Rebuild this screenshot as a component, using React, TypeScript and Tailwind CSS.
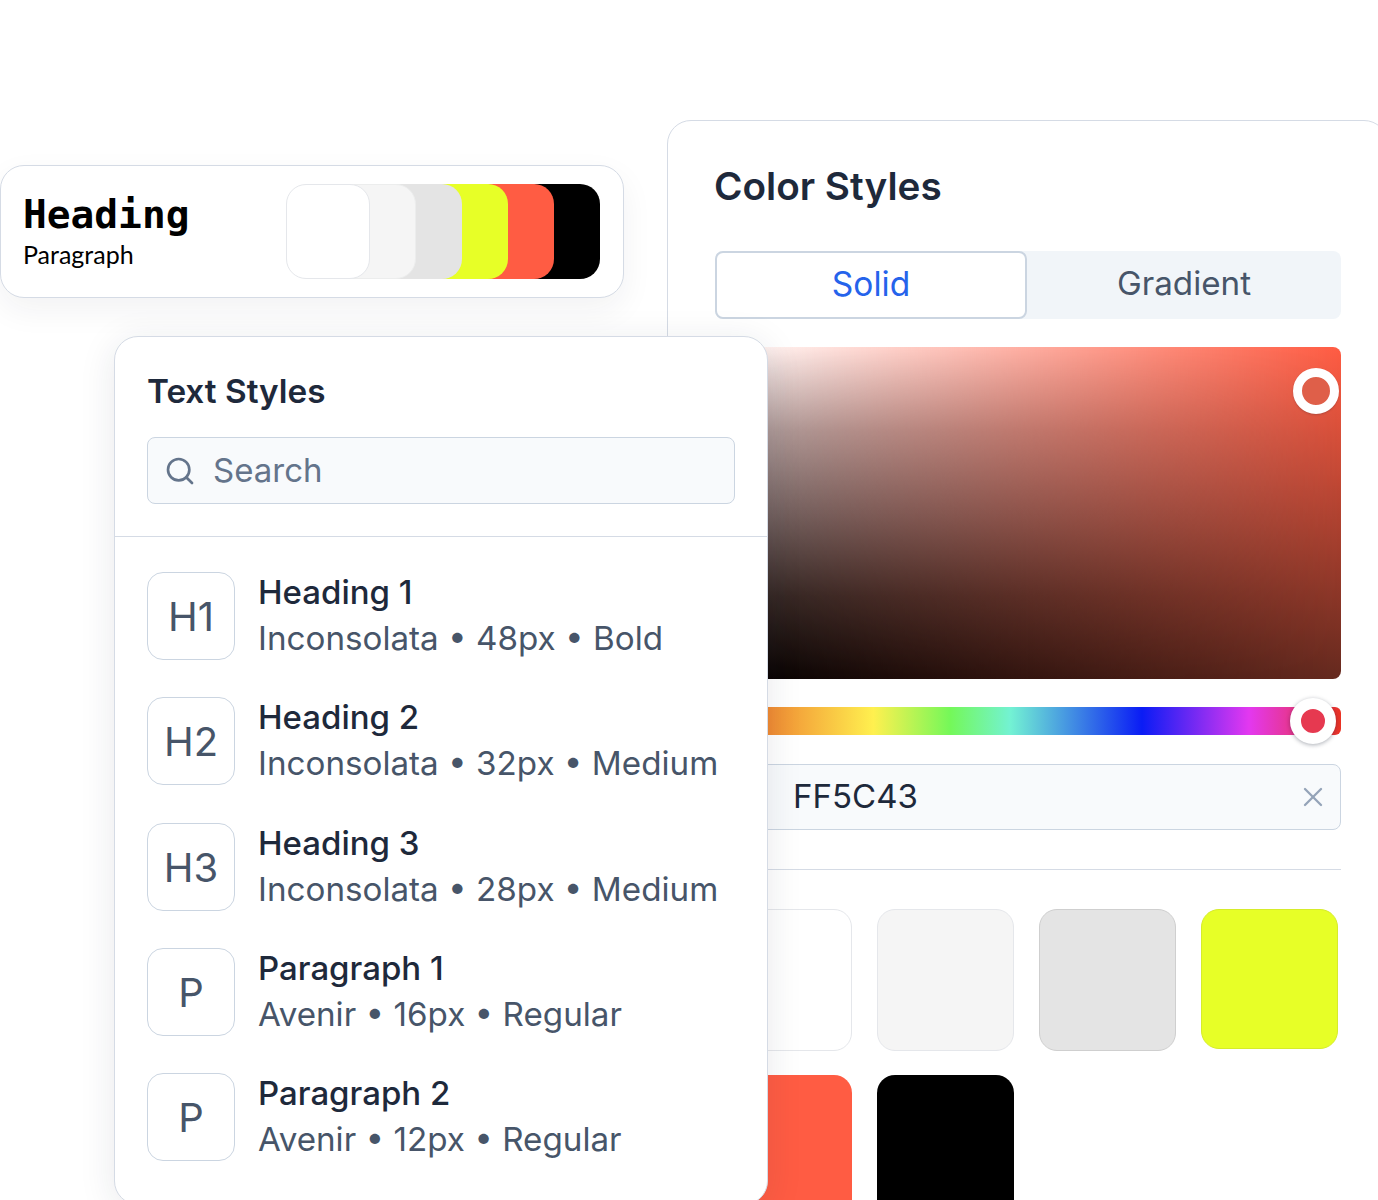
import { Search, X } from "lucide-react";

const overlapSwatches = [
  "z-50 border border-[#e5e7eb] bg-white",
  "z-40 -ml-[38px] border border-[#eceded] bg-[#f5f5f5]",
  "z-30 -ml-[38px] bg-[#e4e4e4]",
  "z-20 -ml-[38px] bg-[#e7ff27]",
  "z-10 -ml-[38px] bg-[#ff5c43]",
  "-ml-[38px] bg-black",
];

const paletteSwatches = [
  "h-[142px] border border-[#e5e7eb] bg-white",
  "h-[142px] border border-[#e5e7eb] bg-[#f5f5f5]",
  "h-[142px] border border-[#cfcfcf] bg-[#e4e4e4]",
  "h-[140px] border border-[#d6ec2a] bg-[#e7ff27]",
  "h-[142px] bg-[#ff5c43]",
  "h-[142px] bg-black",
];

const textStyles = [
  { tag: "H1", name: "Heading 1", meta: "Inconsolata • 48px • Bold" },
  { tag: "H2", name: "Heading 2", meta: "Inconsolata • 32px • Medium" },
  { tag: "H3", name: "Heading 3", meta: "Inconsolata • 28px • Medium" },
  { tag: "P", name: "Paragraph 1", meta: "Avenir • 16px • Regular" },
  { tag: "P", name: "Paragraph 2", meta: "Avenir • 12px • Regular" },
];

function PreviewCard() {
  return (
    <div className="absolute left-0 top-[165px] flex h-[133px] w-[624px] items-center justify-between rounded-3xl border border-[#d5dbe5] bg-white pl-[22px] pr-[23px] shadow-[0_12px_32px_rgba(30,41,59,0.06)]">
      <div className="mb-[3px] flex flex-col">
        <span className="font-['DejaVu_Sans_Mono',monospace] text-[39.5px] font-bold leading-[48px] text-black">
          Heading
        </span>
        <span className="font-['Lato',sans-serif] text-[25px] leading-8 text-black">Paragraph</span>
      </div>
      <div className="flex">
        {overlapSwatches.map((swatch) => (
          <div key={swatch} className={`relative h-[95px] w-[84px] rounded-[20px] ${swatch}`} />
        ))}
      </div>
    </div>
  );
}

function ColorCard() {
  return (
    <div className="absolute left-[667px] top-[120px] h-[1200px] w-[721px] rounded-3xl border border-[#d5dbe5] bg-white pl-[47px] pt-[40px]">
      <div className="flex w-[626px] flex-col font-['Inter',sans-serif]">
        <h2 className="-ml-px text-[38.7px] font-semibold leading-[50px] text-[#1e293b]">Color Styles</h2>
        <div className="mt-[40px] flex h-[68px] rounded-lg bg-[#f1f5f9]">
          <div className="flex w-[312px] items-center justify-center rounded-lg border-2 border-[#cbd5e1] bg-white pb-[2px] text-[33.5px] text-[#2563eb]">
            Solid
          </div>
          <div className="flex flex-1 items-center justify-center pb-[2px] text-[33.2px] text-[#475569]">Gradient</div>
        </div>
        <div className="relative mt-[28px] h-[332px] overflow-hidden rounded-lg bg-[linear-gradient(to_bottom,#ff5c43,#662a1f)]">
          <div className="absolute inset-0 bg-[linear-gradient(to_bottom,#fff,#a8a0a0_25%,#6c6464_50%,#2c2624_75%,#000)] [mask-image:linear-gradient(to_right,black,transparent)]" />
          <div className="absolute left-[578px] top-[21px] size-[46px] rounded-full border-[9px] border-white bg-[#df5f49] shadow-[0_1px_2px_rgba(15,23,42,0.2)]" />
        </div>
        <div className="relative mt-[28px] h-[28px] rounded-md bg-[linear-gradient(to_right,#ea3323_0%,#f08a33_8.5%,#fff04f_25.3%,#74f859_37.6%,#73f2d3_47.2%,#0a1cf5_68.2%,#e338f0_85.3%,#ea3323_100%)]">
          <div className="absolute left-[575px] top-[-9px] size-[46px] rounded-full border-[11px] border-white bg-[#e63950] shadow-[0_1px_4px_rgba(15,23,42,0.35)]" />
        </div>
        <div className="mt-[29px] flex h-[66px] items-center justify-between rounded-lg border border-[#cbd5e1] bg-[#f8fafc] pl-[77px] pr-[11px]">
          <span className="text-[33px] text-[#1e293b]">FF5C43</span>
          <X className="size-8 text-[#94a3b8]" strokeWidth={1.75} />
        </div>
        <div className="mt-[39px] h-px bg-[#d5dbe5]" />
        <div className="mt-[39px] grid w-[623px] grid-cols-4 items-start gap-x-[25px] gap-y-[24px]">
          {paletteSwatches.map((swatch) => (
            <div key={swatch} className={`rounded-[18px] ${swatch}`} />
          ))}
        </div>
      </div>
    </div>
  );
}

function TextStylesCard() {
  return (
    <div className="absolute left-[114px] top-[336px] h-[869px] w-[654px] rounded-3xl border border-[#d5dbe5] bg-white font-['Inter',sans-serif] shadow-[0_6px_36px_rgba(30,41,59,0.1)]">
      <div className="border-b border-[#d5dbe5] px-[32px] pb-[32px] pt-[32px]">
        <h2 className="text-[33.3px] font-semibold leading-[44px] text-[#1e293b]">Text Styles</h2>
        <div className="mt-[24px] flex h-[67px] items-center gap-[17px] rounded-lg border border-[#cbd5e1] bg-[#f8fafc] pl-[16px]">
          <Search className="size-8 text-[#64748b]" strokeWidth={2} />
          <span className="text-[33px] text-[#64748b]">Search</span>
        </div>
      </div>
      <div className="flex flex-col gap-[37.3px] px-[32px] pt-[35px]">
        {textStyles.map((style) => (
          <div key={style.name} className="flex h-[88px] items-center gap-[23px]">
            <div className="flex size-[88px] shrink-0 items-center justify-center rounded-2xl border border-[#cbd5e1] bg-white pt-[2px] text-[40px] text-[#475569]">
              {style.tag}
            </div>
            <div className="flex flex-col pb-[2px]">
              <span className="text-[33px] font-medium leading-[46px] text-[#1e293b]">{style.name}</span>
              <span className="text-[33.2px] leading-[46px] text-[#475569]">{style.meta}</span>
            </div>
          </div>
        ))}
      </div>
    </div>
  );
}

export default function App() {
  return (
    <div className="relative h-[1200px] w-[1378px] overflow-hidden bg-white">
      <ColorCard />
      <PreviewCard />
      <TextStylesCard />
    </div>
  );
}
